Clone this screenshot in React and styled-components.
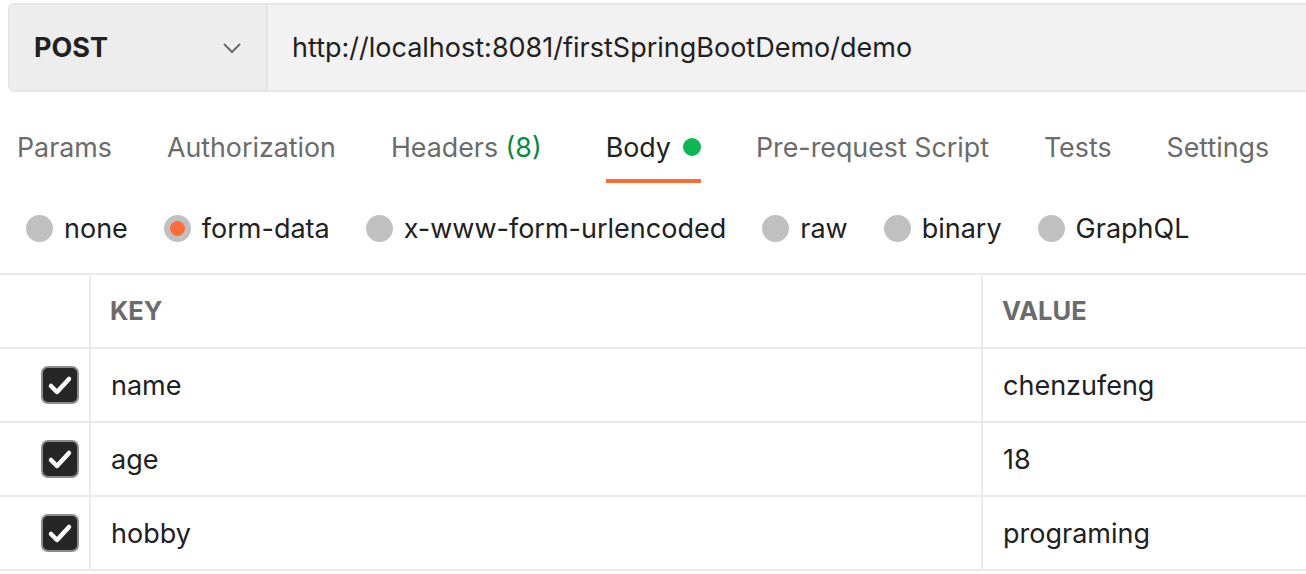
import styled, { createGlobalStyle } from "styled-components";

const GlobalStyle = createGlobalStyle`
  html, body {
    margin: 0;
    padding: 0;
    background: #ffffff;
    overflow: hidden;
  }
  body {
    font-family: Inter, "Noto Sans", "Liberation Sans", sans-serif;
    color: #212121;
  }
`;

const Page = styled.div`
  width: 1306px;
  height: 574px;
  overflow: hidden;
`;

const UrlBar = styled.div`
  display: flex;
  margin: 3px -20px 0 8px;
  height: 85px;
  border: 2px solid #e6e6e6;
  border-radius: 6px;
  overflow: hidden;
`;

const Method = styled.div`
  width: 258px;
  display: flex;
  align-items: center;
  justify-content: space-between;
  padding: 0 24px 0 24px;
  box-sizing: border-box;
  background: #ededed;
  border-right: 2px solid #e3e3e3;
  font-size: 27px;
  font-weight: 700;
  color: #212121;
`;

const Url = styled.div`
  flex: 1;
  display: flex;
  align-items: center;
  padding-left: 24px;
  background: #f2f2f2;
  font-size: 27px;
  color: #212121;
`;

const Tabs = styled.div`
  display: flex;
  gap: 55px;
  padding-left: 17px;
  height: 91px;
`;

const Tab = styled.div`
  display: flex;
  align-items: center;
  gap: 12px;
  font-size: 26.8px;
  color: ${({ active }) => (active ? "#212121" : "#6b6b6b")};
  border-bottom: 4px solid ${({ active }) => (active ? "#ff6c37" : "transparent")};
  box-sizing: border-box;
  padding-top: 23px;
  margin-right: ${({ extra }) => extra || 0}px;
`;

const Count = styled.span`
  color: #0a8a3a;
`;

const Dot = styled.span`
  width: 18px;
  height: 18px;
  border-radius: 50%;
  background: #0cb754;
`;

const Radios = styled.div`
  display: flex;
  align-items: center;
  padding-left: 26px;
  gap: 36px;
  height: 90px;
`;

const Radio = styled.label`
  display: flex;
  align-items: center;
  gap: 11px;
  font-size: 27px;
  color: #212121;
`;

const Circle = styled.span`
  width: 27px;
  height: 27px;
  border-radius: 50%;
  background: #c0c0c0;
  display: flex;
  align-items: center;
  justify-content: center;
  &::after {
    content: "";
    width: 15px;
    height: 15px;
    border-radius: 50%;
    background: ${({ checked }) => (checked ? "#ff6c37" : "transparent")};
  }
`;

const Table = styled.div`
  border-top: 2px solid #ebebeb;
  width: 1330px;
`;

const Row = styled.div`
  display: grid;
  grid-template-columns: 91px 892px 1fr;
  height: 74px;
  border-bottom: 2px solid #ebebeb;
  box-sizing: border-box;
`;

const Cell = styled.div`
  display: flex;
  align-items: center;
  padding-left: ${({ pad }) => pad || 20}px;
  border-right: 2px solid #ebebeb;
  font-size: 27px;
  color: #212121;
  &:last-child {
    border-right: none;
  }
`;

const HeadCell = styled(Cell)`
  font-weight: 700;
  color: #6b6b6b;
  font-size: 25.5px;
  padding-bottom: 2px;
`;

const CheckCell = styled(Cell)`
  justify-content: flex-end;
  padding-right: 10px;
  padding-left: 0;
`;

const Checkbox = styled.span`
  width: 38px;
  height: 38px;
  box-sizing: border-box;
  border: 2px solid #8c8c8c;
  border-radius: 7px;
  background: #262626;
  display: flex;
  align-items: center;
  justify-content: center;
`;

const Chevron = () => (
  <svg width="20" height="12" viewBox="0 0 20 12" fill="none">
    <path d="M2 2l8 8 8-8" stroke="#6b6b6b" strokeWidth="2" />
  </svg>
);

const Check = () => (
  <svg width="26" height="22" viewBox="0 0 26 22" fill="none">
    <path
      d="M4 12l6 6L22 5"
      stroke="#ffffff"
      strokeWidth="4.5"
      strokeLinecap="round"
      strokeLinejoin="round"
    />
  </svg>
);

const tabs = [
  { label: "Params" },
  { label: "Authorization" },
  { label: "Headers", count: "(8)", extra: 9 },
  { label: "Body", active: true, dot: true },
  { label: "Pre-request Script" },
  { label: "Tests" },
  { label: "Settings" },
];

const bodyTypes = ["none", "form-data", "x-www-form-urlencoded", "raw", "binary", "GraphQL"];

const rows = [
  { key: "name", value: "chenzufeng" },
  { key: "age", value: "18" },
  { key: "hobby", value: "programing" },
];

export default function App() {
  return (
    <Page>
      <GlobalStyle />
      <UrlBar>
        <Method>
          POST
          <Chevron />
        </Method>
        <Url>http://localhost:8081/firstSpringBootDemo/demo</Url>
      </UrlBar>
      <Tabs>
        {tabs.map((t) => (
          <Tab key={t.label} active={t.active} extra={t.extra}>
            <span>
              {t.label}
              {t.count && <Count> {t.count}</Count>}
            </span>
            {t.dot && <Dot />}
          </Tab>
        ))}
      </Tabs>
      <Radios>
        {bodyTypes.map((b) => (
          <Radio key={b}>
            <Circle checked={b === "form-data"} />
            {b}
          </Radio>
        ))}
      </Radios>
      <Table>
        <Row>
          <Cell />
          <HeadCell pad={19}>KEY</HeadCell>
          <HeadCell pad={19}>VALUE</HeadCell>
        </Row>
        {rows.map((r) => (
          <Row key={r.key}>
            <CheckCell>
              <Checkbox>
                <Check />
              </Checkbox>
            </CheckCell>
            <Cell pad={20}>{r.key}</Cell>
            <Cell pad={20}>{r.value}</Cell>
          </Row>
        ))}
      </Table>
    </Page>
  );
}
